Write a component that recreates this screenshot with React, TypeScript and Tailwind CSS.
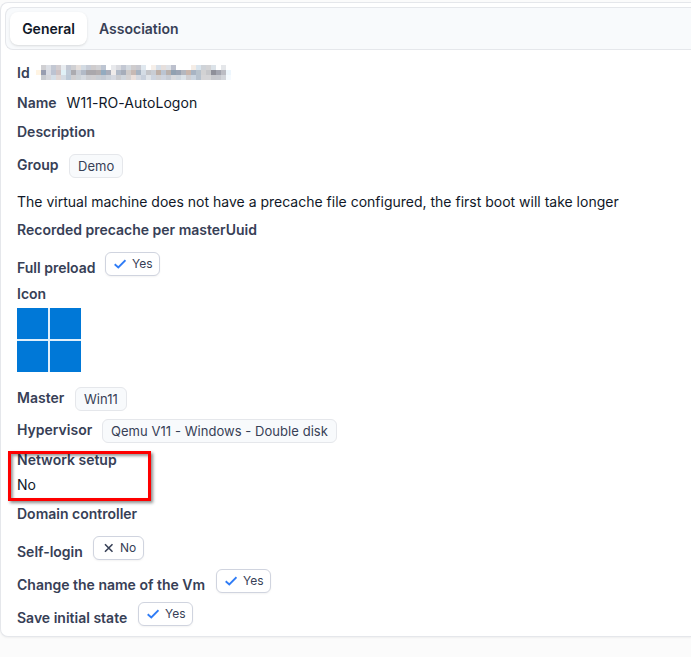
import React from 'react';

const MOSAIC = [
  ['#ffffff', '#d0d0d3', '#dcdfe5', '#c3c8d3', '#d2cdd0', '#e8ecf0', '#c3c8d3', '#d0d0d3', '#e5dfdc', '#d3dbe3', '#c7ccd6', '#cfcccd', '#d2d2d5', '#bdc5d2', '#ffffff', '#e8e9ec', '#dadbe0', '#c3c8d3', '#d5dae0', '#cfcccd', '#c8c9d0', '#e0e8ef', '#ffffff', '#f6efe9', '#d8e0e9', '#e6dfdc', '#dfe2e7', '#bcc0cd', '#ffffff', '#ffffff', '#ffffff', '#f5ede6', '#dae5ee', '#cfd3d8', '#d4d4d6', '#dce3e9', '#ffffff', '#e5e7ea', '#ffffff'],
  ['#fff4e3', '#989db0', '#d9dbe3', '#bcc3d2', '#cfc2c3', '#e0f1f7', '#c0cbd8', '#ababb0', '#c8ccd4', '#b2bac7', '#aaa8ac', '#aaa8ac', '#b2adae', '#93abc0', '#a9adba', '#efebea', '#b1bac8', '#a6adba', '#cfcbca', '#c7b9b4', '#a6b3c2', '#d4dce5', '#c4c5c9', '#c9cdd4', '#beafa6', '#bbc4d2', '#b9b0ac', '#91a1b1', '#9ba4b3', '#b4b7bf', '#c9b6ac', '#a8b4c3', '#b7c2cc', '#d2d2d3', '#c6c7ca', '#8e8f99', '#a2a4af', '#bbbcc4', '#edf6fd'],
  ['#ffffff', '#c9cbd0', '#d6d7dc', '#d5dfe8', '#e1d8d6', '#d5dce4', '#bccad8', '#d0cfd1', '#cdd3d8', '#d6dae0', '#cdced2', '#d0cfd1', '#c9ced4', '#c4cad4', '#cdd3db', '#d6d9e1', '#cbccd0', '#d0d6dd', '#d5d3d4', '#ebe0dc', '#d6dae2', '#c8d0dc', '#e0e4e9', '#cdd4df', '#d1d1d4', '#cfd4df', '#c7ccd5', '#d9dadd', '#d1d8df', '#dce3e9', '#d0cfd2', '#cbd5e0', '#b7c2ce', '#d5d5d7', '#d5d5d7', '#c7c8cd', '#c7c9cf', '#d2d5db', '#f5faff'],
];

interface LabelProps {
  children: React.ReactNode;
  className?: string;
}

const Label: React.FC<LabelProps> = ({ children, className = '' }) => (
  <span className={`h-5 font-semibold text-[#374056] ${className}`}>{children}</span>
);

const Tag: React.FC<LabelProps> = ({ children }) => (
  <span className="h-6 rounded-md border border-gray-200 bg-slate-50 px-2 text-[13px] leading-[23px] tracking-[0.05px] text-[#374056]">
    {children}
  </span>
);

const BoolButton: React.FC<{ value: boolean }> = ({ value }) => (
  <button
    className={`flex h-6 items-center rounded-md border border-[#d0d4df] bg-white px-[7px] text-xs text-[#374056] shadow-xs ${
      value ? 'w-[55px]' : 'w-[51px]'
    }`}
  >
    {value ? (
      <svg className="mr-1.5 ml-px h-3 w-3 shrink-0" viewBox="0 0 12 12" fill="none" stroke="#2f7cf6" strokeWidth="1.9">
        <path d="M.7 6.3 4.3 9.5 11.5 2.2" />
      </svg>
    ) : (
      <svg className="mr-1 ml-[3px] h-3 w-3 shrink-0" viewBox="0 0 12 12" fill="none" stroke="#374056" strokeWidth="1.6">
        <path d="m1 2.3 7.5 7.5M8.5 2.3 1 9.8" />
      </svg>
    )}
    {value ? 'Yes' : 'No'}
  </button>
);

interface BoolRowProps {
  label: string;
  value: boolean;
  labelClass: string;
}

const BoolRow: React.FC<BoolRowProps> = ({ label, value, labelClass }) => (
  <div className="flex h-[26px] items-start gap-2.5">
    <Label className={`mt-1.5 ${labelClass}`}>{label}</Label>
    <BoolButton value={value} />
  </div>
);

interface TagRowProps {
  label: string;
  value: string;
  labelClass: string;
}

const TagRow: React.FC<TagRowProps> = ({ label, value, labelClass }) => (
  <div className="flex h-6 items-start gap-2.5">
    <Label className={`mt-px ${labelClass}`}>{label}</Label>
    <Tag>{value}</Tag>
  </div>
);

export default function App() {
  return (
    <div className="h-[657px] overflow-hidden bg-[#fbfbfb] pt-0.5 font-['Inter',sans-serif] text-sm whitespace-nowrap text-gray-900">
      <div className="h-[635px] rounded-l-lg border border-r-0 border-gray-200 bg-white pt-1 shadow-xs">
        {/* Tabs */}
        <div className="ml-1 flex h-[43px] rounded-l-lg border border-r-0 border-gray-200 bg-slate-50 p-1 font-semibold">
          <div className="flex h-[33px] w-[77px] items-center justify-center rounded-lg bg-white shadow-sm">General</div>
          <div className="ml-3 flex h-[33px] items-center text-[#374056]">Association</div>
        </div>

        {/* Details */}
        <div className="flex flex-col pt-[13px] pl-4">
          <div className="flex h-5 items-start">
            <Label className="w-[19px]">Id</Label>
            <div className="mt-0.5 grid grid-cols-[repeat(39,5px)]">
              {MOSAIC.flat().map((color, i) => (
                <span key={i} className="h-[5px]" style={{ backgroundColor: color }} />
              ))}
            </div>
          </div>
          <div className="mt-2.5 flex h-5 gap-2.5">
            <Label>Name</Label>
            <span className="tracking-[0.07px]">W11-RO-AutoLogon</span>
          </div>
          <Label className="mt-[9px]">Description</Label>
          <div className="mt-3">
            <TagRow label="Group" value="Demo" labelClass="w-[42px]" />
          </div>
          <p className="mt-3.5 h-5">
            The virtual machine does not have a precache file configured, the first boot will take longer
          </p>
          <Label className="mt-2">Recorded precache per masterUuid</Label>
          <div className="mt-3">
            <BoolRow label="Full preload" value={true} labelClass="w-[78px]" />
          </div>
          <Label className="mt-1.5">Icon</Label>
          <div className="mt-1 grid h-16 w-16 grid-cols-2 gap-0.5 bg-[#e0effb]">
            <span className="bg-[#0078d7]" />
            <span className="bg-[#0078d7]" />
            <span className="bg-[#0078d7]" />
            <span className="bg-[#0078d7]" />
          </div>
          <div className="mt-[15px] flex flex-col gap-2">
            <TagRow label="Master" value="Win11" labelClass="w-12" />
            <TagRow label="Hypervisor" value="Qemu V11 - Windows - Double disk" labelClass="w-[75px]" />
          </div>
          <div className="relative mt-[7px] flex flex-col">
            <Label>Network setup</Label>
            <span className="mt-[5px] h-5">No</span>
            {/* Highlight frame */}
            <div className="absolute top-px -left-[9px] h-[50px] w-[143px] border-3 border-[#fe0000] shadow-[2px_2px_3px_rgba(0,0,0,0.45),inset_2px_2px_3px_rgba(0,0,0,0.4)]" />
          </div>
          <Label className="mt-[9px]">Domain controller</Label>
          <div className="mt-3 flex flex-col gap-[7px]">
            <BoolRow label="Self-login" value={false} labelClass="w-[66px]" />
            <BoolRow label="Change the name of the Vm" value={true} labelClass="w-[189px]" />
            <BoolRow label="Save initial state" value={true} labelClass="w-[111px]" />
          </div>
        </div>
      </div>
    </div>
  );
}
